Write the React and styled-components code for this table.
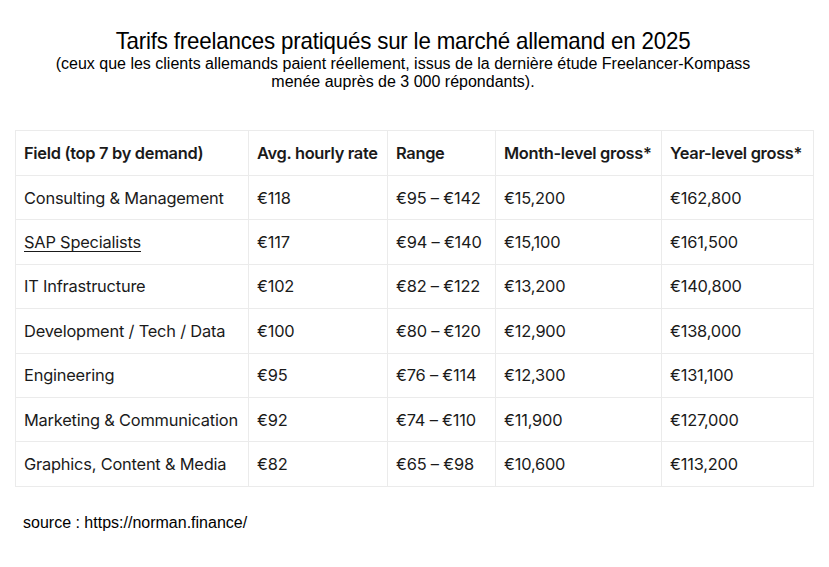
import React from "react";
import styled, { createGlobalStyle } from "styled-components";

const GlobalStyle = createGlobalStyle`
  body {
    margin: 0;
    background: #ffffff;
    color: #111;
  }
`;

const rows = [
  { field: "Consulting & Management", avg: "€118", range: "€95 – €142", month: "€15,200", year: "€162,800" },
  { field: "SAP Specialists", avg: "€117", range: "€94 – €140", month: "€15,100", year: "€161,500", link: true },
  { field: "IT Infrastructure", avg: "€102", range: "€82 – €122", month: "€13,200", year: "€140,800" },
  { field: "Development / Tech / Data", avg: "€100", range: "€80 – €120", month: "€12,900", year: "€138,000" },
  { field: "Engineering", avg: "€95", range: "€76 – €114", month: "€12,300", year: "€131,100" },
  { field: "Marketing & Communication", avg: "€92", range: "€74 – €110", month: "€11,900", year: "€127,000" },
  { field: "Graphics, Content & Media", avg: "€82", range: "€65 – €98", month: "€10,600", year: "€113,200" },
];

export default function App() {
  return (
    <>
      <GlobalStyle />
      <Page>
        <Header>
          <Title>Tarifs freelances pratiqués sur le marché allemand en 2025</Title>
          <Subtitle>
            (ceux que les clients allemands paient réellement, issus de la dernière étude Freelancer-Kompass
            <br />
            menée auprès de 3 000 répondants).
          </Subtitle>
        </Header>
        <Table>
          <colgroup>
            <col style={{ width: 233 }} />
            <col style={{ width: 139 }} />
            <col style={{ width: 108 }} />
            <col style={{ width: 166 }} />
            <col style={{ width: 152 }} />
          </colgroup>
          <thead>
            <tr>
              <Th>Field (top 7 by demand)</Th>
              <Th>Avg. hourly rate</Th>
              <Th>Range</Th>
              <Th>Month-level gross*</Th>
              <Th>Year-level gross*</Th>
            </tr>
          </thead>
          <tbody>
            {rows.map((r) => (
              <tr key={r.field}>
                <Td>{r.link ? <Link>{r.field}</Link> : r.field}</Td>
                <Td>{r.avg}</Td>
                <Td>{r.range}</Td>
                <Td>{r.month}</Td>
                <Td>{r.year}</Td>
              </tr>
            ))}
          </tbody>
        </Table>
        <Source>source : https://norman.finance/</Source>
      </Page>
    </>
  );
}

const Page = styled.div`
  width: 829px;
  height: 567px;
  padding-top: 27px;
  box-sizing: border-box;
`;

const Header = styled.div`
  width: 806px;
  text-align: center;
  font-family: "Liberation Sans", Arial, sans-serif;
  color: #000;
`;

const Title = styled.h1`
  display: inline-block;
  margin: 0;
  font-size: 24px;
  font-weight: 400;
  line-height: 28px;
  transform: scaleX(0.93);
  letter-spacing: -0.2px;
`;

const Subtitle = styled.p`
  margin: 0;
  font-size: 16px;
  line-height: 18px;
`;

const Table = styled.table`
  margin: 39px 0 0 15px;
  width: 798px;
  border-collapse: collapse;
  table-layout: fixed;
  font-family: "Inter", "Lato", sans-serif;
  font-size: 16.4px;
  color: #1a1a1a;
`;

const Th = styled.th`
  text-align: left;
  font-weight: 600;
  height: 44px;
  padding: 0 8px;
  border: 1px solid #ebebeb;
  letter-spacing: -0.3px;
  white-space: nowrap;
`;

const Td = styled.td`
  height: 43.4px;
  padding: 0 8px;
  border: 1px solid #ebebeb;
  letter-spacing: -0.2px;
  white-space: nowrap;
`;

const Link = styled.span`
  text-decoration: underline;
  text-underline-offset: 3px;
`;

const Source = styled.div`
  margin: 27px 0 0 23px;
  font-family: "Liberation Sans", Arial, sans-serif;
  font-size: 16px;
  color: #000;
`;
